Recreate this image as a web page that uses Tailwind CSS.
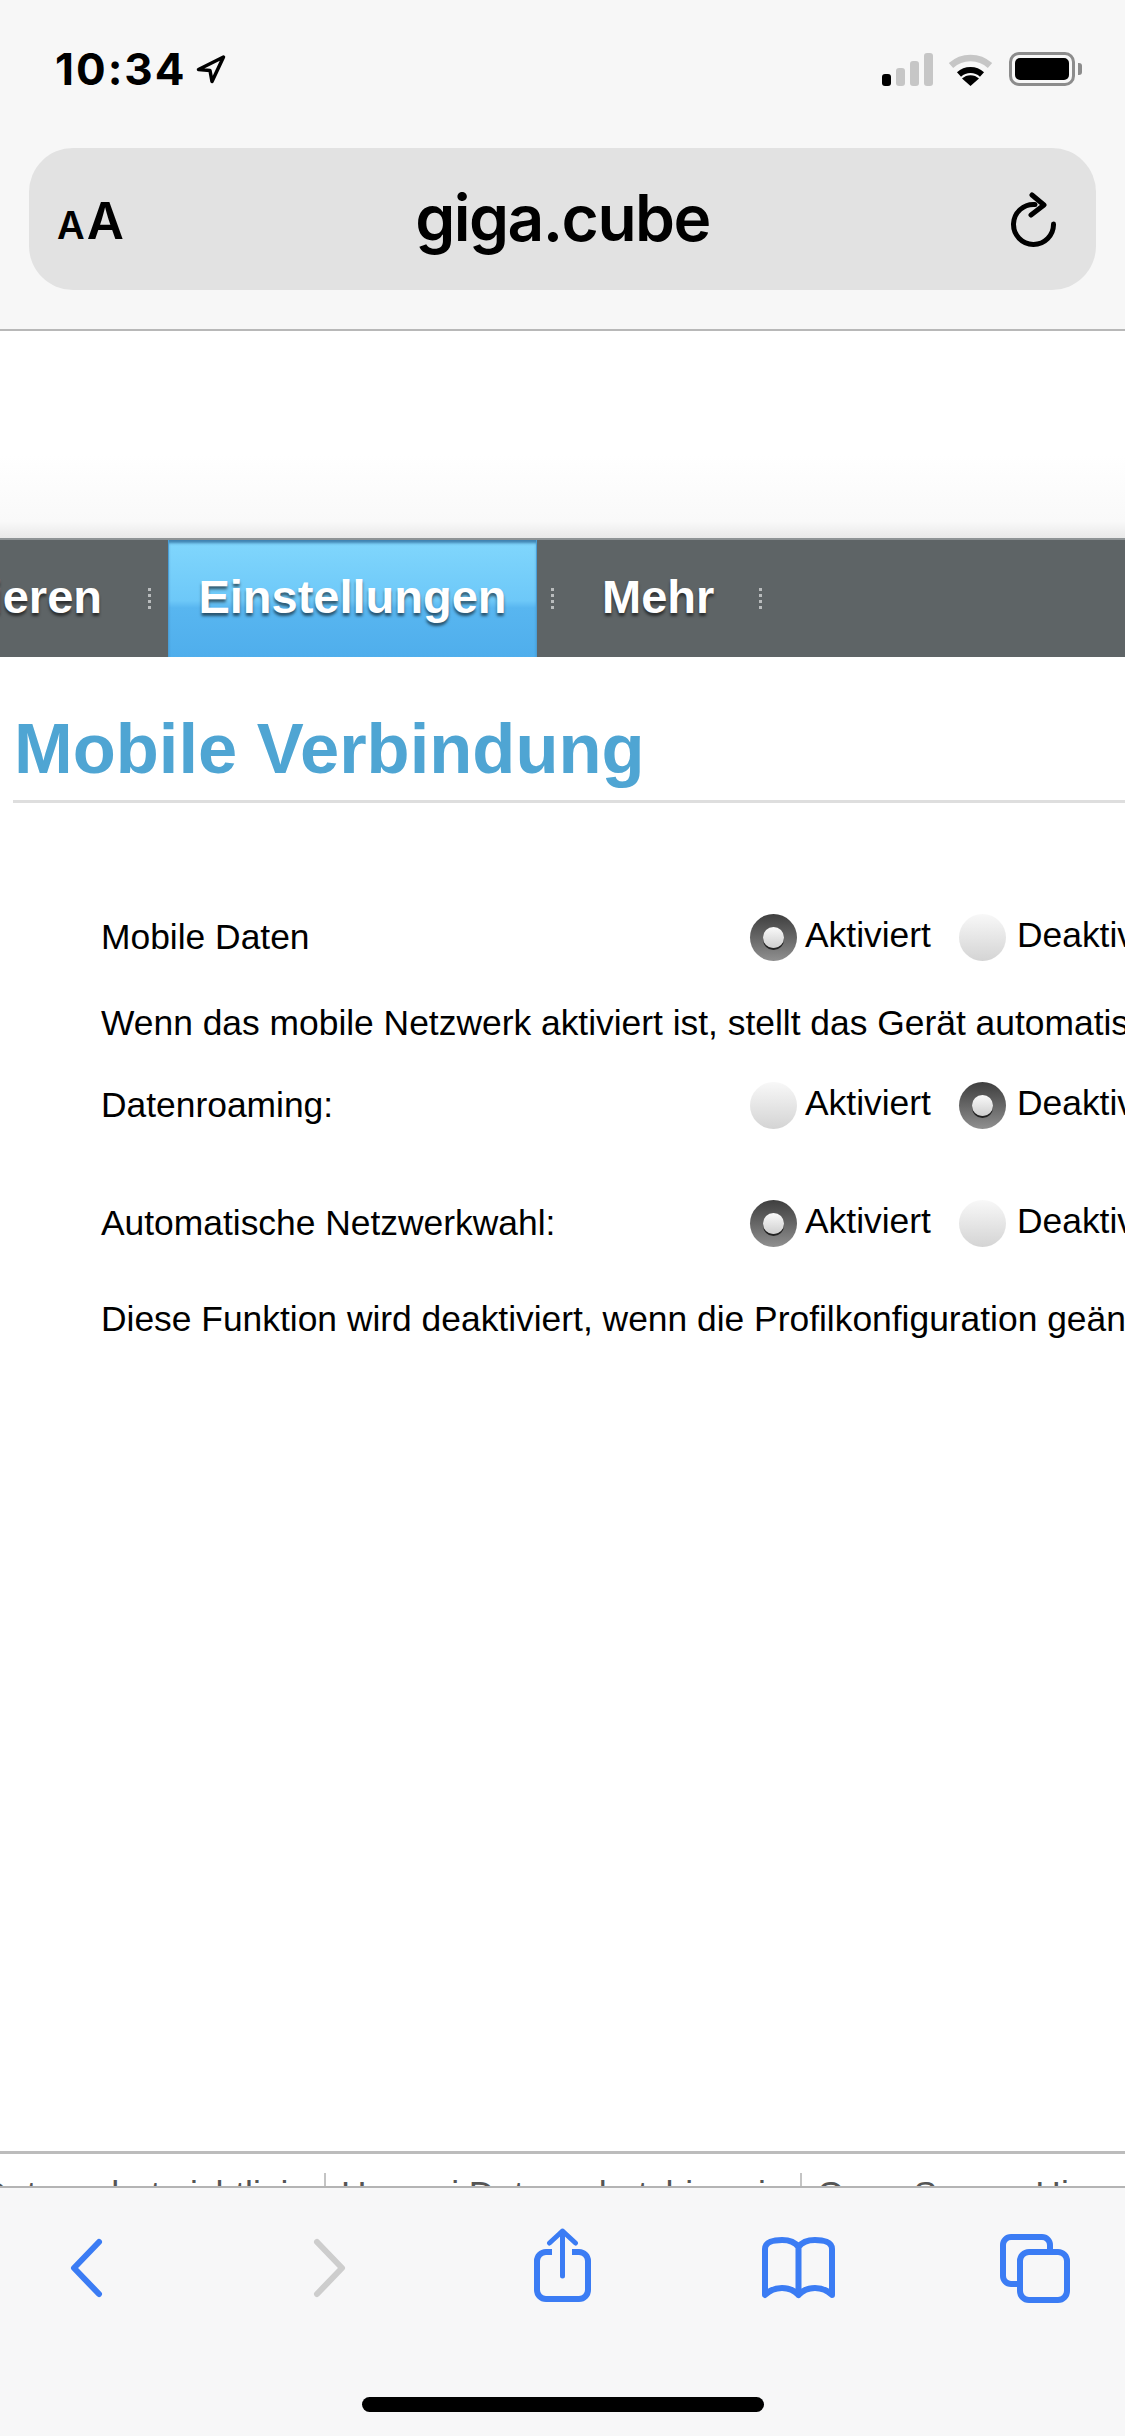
<!DOCTYPE html>
<html lang="de">
<head>
    <meta charset="UTF-8">
    <meta name="viewport" content="width=device-width, initial-scale=1.0">
    <title>giga.cube</title>
    <script src="https://cdn.jsdelivr.net/npm/@tailwindcss/browser@4"></script>
</head>
<body class="bg-white">
<div class="w-[1125px] h-[2436px] overflow-hidden flex flex-col font-['Liberation_Sans',Arial,sans-serif] text-black">

    <!-- Safari header -->
    <header class="h-[331px] shrink-0 bg-[#f7f7f7] border-b-2 border-[#b8b8b8] pt-[52px]">
        <div class="h-[34px] flex items-center">
            <span class="ml-[55px] w-[130px] shrink-0 font-['Inter',sans-serif] font-bold text-[44px] leading-[34px] tracking-[2px] whitespace-nowrap">10:34</span>
            <svg class="ml-[11px] shrink-0" width="30" height="30" viewBox="0 0 30 30" fill="none" stroke="#000" stroke-width="3.5" stroke-linejoin="round"><path d="M27.5 3 L2.5 15.5 L14 16.5 L16 27.5 Z"/></svg>
            <div class="ml-[656px] flex items-end gap-[5px] h-[33px] shrink-0">
                <div class="w-[9px] h-[12px] rounded-[3px] bg-black"></div>
                <div class="w-[9px] h-[18px] rounded-[3px] bg-[#c6c6c6]"></div>
                <div class="w-[9px] h-[25px] rounded-[3px] bg-[#c6c6c6]"></div>
                <div class="w-[9px] h-[33px] rounded-[3px] bg-[#c6c6c6]"></div>
            </div>
            <svg class="ml-[15px] shrink-0" width="45" height="33" viewBox="0 0 45 33" fill="none">
                <path d="M3 12.5 A29 29 0 0 1 42 12.5" stroke="#c6c6c6" stroke-width="6.5"/>
                <path d="M11 21.5 A17 17 0 0 1 34 21.5" stroke="#000" stroke-width="6"/>
                <path d="M22.5 33 L14 25.5 A12.5 12.5 0 0 1 31 25.5 Z" fill="#000"/>
            </svg>
            <div class="ml-[16px] w-[66px] h-[34px] shrink-0 rounded-[10px] border-[3px] border-[#8c8c8c] p-[3px]">
                <div class="w-full h-full rounded-[5px] bg-black"></div>
            </div>
            <div class="ml-[3px] w-[4px] h-[12px] shrink-0 rounded-r-[3px] bg-[#8c8c8c]"></div>
        </div>

        <div class="mt-[62px] mx-[29px] h-[142px] rounded-[44px] bg-[#e2e2e2] flex items-center">
            <div class="ml-[28px] w-[70px] shrink-0 flex items-baseline gap-[2px] font-['Inter',sans-serif] font-semibold mt-[2px]">
                <span class="text-[38px] leading-none">A</span><span class="text-[51px] leading-none">A</span>
            </div>
            <div class="flex-1 text-center font-['Inter',sans-serif] font-semibold text-[64px] tracking-[-1.5px] mr-[13px] mt-[-2px]">giga.cube</div>
            <svg class="mr-[40px] shrink-0" width="45" height="55" viewBox="0 0 45 55" fill="none" stroke="#000" stroke-width="5" stroke-linecap="round" stroke-linejoin="round">
                <path d="M42.5 32 A20 20 0 1 1 24 12.5"/>
                <path d="M21 3 L33 13 L20 23"/>
            </svg>
        </div>
    </header>

    <!-- Page -->
    <main class="flex-1 min-h-0 overflow-hidden flex flex-col bg-white">
        <div class="h-[207px] shrink-0 bg-[linear-gradient(to_bottom,#fff_60%,#f9f9f9_92%,#e9e9e9_100%)]"></div>

        <nav class="h-[119px] shrink-0 bg-[#5e6466] border-t-2 border-[#8f9496] flex text-white font-bold text-[47px] [text-shadow:0_3px_3px_rgba(0,0,0,0.55)]">
            <div class="w-[102px] shrink-0 overflow-hidden flex justify-end items-center pb-[2px]"><span class="whitespace-nowrap">Aktualisieren</span></div>
            <div class="ml-[46px] shrink-0 self-center h-[21px] border-l-[3px] border-dotted border-[#b9bcbd]"></div>
            <div class="ml-[17px] w-[369px] shrink-0 flex justify-center items-center pb-[2px] border-x border-[#4a9ed6] shadow-[inset_0_4px_3px_-1px_rgba(40,100,150,0.75)] bg-[linear-gradient(to_bottom,#81d7fd_0%,#6dc8f8_52%,#58b6f0_58%,#4faeec_100%)]">Einstellungen</div>
            <div class="ml-[14px] shrink-0 self-center h-[21px] border-l-[3px] border-dotted border-[#b9bcbd]"></div>
            <div class="ml-[48px] shrink-0 flex items-center pb-[2px]">Mehr</div>
            <div class="ml-[45px] shrink-0 self-center h-[21px] border-l-[3px] border-dotted border-[#b9bcbd]"></div>
        </nav>

        <h1 class="ml-[13px] mt-[52px] h-[94px] shrink-0 border-b-[3px] border-[#dedede] pl-[1px] text-[70.5px] leading-[80px] font-bold text-[#4fa5d3] whitespace-nowrap">Mobile Verbindung</h1>

        <section class="mt-[111px] pl-[101px] text-[35.4px] flex-1 min-h-0 whitespace-nowrap">
            <div class="flex h-[47px]">
                <span class="w-[649px] shrink-0 leading-[45px] pt-[1px]">Mobile Daten</span>
                <div class="w-[47px] h-[47px] shrink-0 rounded-full bg-linear-to-b from-[#3f3f3f] to-[#909090] flex items-center justify-center"><div class="w-[21px] h-[21px] rounded-full bg-linear-to-b from-[#fafafa] to-[#cfcfcf] shadow-[0_2px_0_#222]"></div></div>
                <span class="ml-[8px] w-[127px] shrink-0 leading-[42px]">Aktiviert</span>
                <div class="ml-[27px] w-[47px] h-[47px] shrink-0 rounded-full bg-linear-to-b from-[#f8f8f8] to-[#d4d4d4]"></div>
                <span class="ml-[11px] shrink-0 leading-[42px]">Deaktiviert</span>
            </div>
            <p class="mt-[42px] leading-[40px]">Wenn das mobile Netzwerk aktiviert ist, stellt das Gerät automatisch eine Verbindung her.</p>
            <div class="flex h-[47px] mt-[39px]">
                <span class="w-[649px] shrink-0 leading-[45px] pt-[1px]">Datenroaming:</span>
                <div class="w-[47px] h-[47px] shrink-0 rounded-full bg-linear-to-b from-[#f8f8f8] to-[#d4d4d4]"></div>
                <span class="ml-[8px] w-[127px] shrink-0 leading-[42px]">Aktiviert</span>
                <div class="ml-[27px] w-[47px] h-[47px] shrink-0 rounded-full bg-linear-to-b from-[#3f3f3f] to-[#909090] flex items-center justify-center"><div class="w-[21px] h-[21px] rounded-full bg-linear-to-b from-[#fafafa] to-[#cfcfcf] shadow-[0_2px_0_#222]"></div></div>
                <span class="ml-[11px] shrink-0 leading-[42px]">Deaktiviert</span>
            </div>
            <div class="flex h-[47px] mt-[71px]">
                <span class="w-[649px] shrink-0 leading-[45px] pt-[1px]">Automatische Netzwerkwahl:</span>
                <div class="w-[47px] h-[47px] shrink-0 rounded-full bg-linear-to-b from-[#3f3f3f] to-[#909090] flex items-center justify-center"><div class="w-[21px] h-[21px] rounded-full bg-linear-to-b from-[#fafafa] to-[#cfcfcf] shadow-[0_2px_0_#222]"></div></div>
                <span class="ml-[8px] w-[127px] shrink-0 leading-[42px]">Aktiviert</span>
                <div class="ml-[27px] w-[47px] h-[47px] shrink-0 rounded-full bg-linear-to-b from-[#f8f8f8] to-[#d4d4d4]"></div>
                <span class="ml-[11px] shrink-0 leading-[42px]">Deaktiviert</span>
            </div>
            <p class="mt-[52px] leading-[40px]">Diese Funktion wird deaktiviert, wenn die Profilkonfiguration geändert wird.</p>
        </section>

        <!-- Footer links, cut off by the toolbar -->
        <footer class="h-[35px] shrink-0 border-t-[3px] border-[#bcbcbc] overflow-hidden flex whitespace-nowrap text-[35.4px] text-[#555] pt-[19px]">
            <div class="w-[326px] shrink-0 h-[42px] border-r-2 border-[#c4c4c4] leading-[42px] overflow-hidden flex justify-end pr-[16px]">Datenschutzrichtlinie</div>
            <div class="w-[476px] shrink-0 h-[42px] border-r-2 border-[#c4c4c4] pl-[15px] leading-[42px]">Huawei Datenschutzhinweis</div>
            <div class="shrink-0 pl-[15px] leading-[42px]">Open Source Hinweis</div>
        </footer>
    </main>

    <!-- Safari toolbar -->
    <div class="h-[250px] shrink-0 bg-[#f7f7f8] border-t-2 border-[#b4b4b4] pt-[40px]">
        <div class="flex h-[80px]">
            <svg class="ml-[70px] shrink-0" width="33" height="80" viewBox="0 0 33 80" fill="none" stroke="#3b7cf4" stroke-width="6" stroke-linecap="round" stroke-linejoin="round"><path d="M29 14 L4 40 L29 66"/></svg>
            <svg class="ml-[210px] shrink-0" width="33" height="80" viewBox="0 0 33 80" fill="none" stroke="#cdcdcd" stroke-width="6" stroke-linecap="round" stroke-linejoin="round"><path d="M4 14 L29 40 L4 66"/></svg>
            <svg class="ml-[188px] shrink-0" width="57" height="80" viewBox="0 0 57 80" fill="none" stroke="#3b7cf4" stroke-width="6" stroke-linecap="round" stroke-linejoin="round">
                <path stroke-linecap="butt" d="M18 24 H12 A9 9 0 0 0 3 33 V62 A9 9 0 0 0 12 71 H45 A9 9 0 0 0 54 62 V33 A9 9 0 0 0 45 24 H38"/>
                <path stroke-width="5" d="M28.5 48 V3 M15.5 15 L28.5 3 L41.5 15"/>
            </svg>
            <svg class="ml-[171px] shrink-0" width="73" height="80" viewBox="0 0 73 80" fill="none" stroke="#3b7cf4" stroke-width="6" stroke-linecap="round" stroke-linejoin="round">
                <path d="M3 67 V21 C3 14 12 12 20 12 C27 12 33 14 36.5 19 C40 14 46 12 53 12 C61 12 70 14 70 21 V67 C65 62 60 60 53 60 C46 60 41 62 36.5 67 C32 62 27 60 20 60 C13 60 8 62 3 67 Z M36.5 19 V67"/>
            </svg>
            <svg class="ml-[165px] shrink-0" width="70" height="80" viewBox="0 0 70 80" fill="none" stroke="#3b7cf4" stroke-width="6">
                <rect x="20" y="24" width="47" height="48" rx="9"/>
                <path d="M20 56 H11 A8 8 0 0 1 3 48 V17 A8 8 0 0 1 11 9 H42 A8 8 0 0 1 50 17 V24"/>
            </svg>
        </div>
        <div class="mt-[89px] mx-auto w-[402px] h-[15px] rounded-full bg-black"></div>
    </div>
</div>
</body>
</html>
